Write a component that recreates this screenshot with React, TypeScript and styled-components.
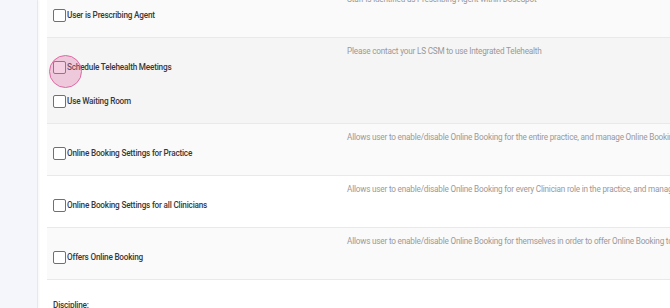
import styled, { createGlobalStyle } from "styled-components";

const GlobalStyle = createGlobalStyle`
	html, body {
		margin: 0;
		padding: 0;
		background: #ffffff;
		overflow: hidden;
	}
	body {
		font-family: Roboto, "Liberation Sans", sans-serif;
	}
`;

type Permission = {
	description: string;
	labels: string[];
	tone: "light" | "muted" | "white";
};

const permissions: Permission[] = [
	{
		description: "Staff is identified as Prescribing Agent within DoseSpot",
		labels: ["User is Prescribing Agent"],
		tone: "light",
	},
	{
		description: "Please contact your LS CSM to use Integrated Telehealth",
		labels: ["Schedule Telehealth Meetings", "Use Waiting Room"],
		tone: "muted",
	},
	{
		description:
			"Allows user to enable/disable Online Booking for the entire practice, and manage Online Booking settings",
		labels: ["Online Booking Settings for Practice"],
		tone: "light",
	},
	{
		description:
			"Allows user to enable/disable Online Booking for every Clinician role in the practice, and manage their settings",
		labels: ["Online Booking Settings for all Clinicians"],
		tone: "white",
	},
	{
		description:
			"Allows user to enable/disable Online Booking for themselves in order to offer Online Booking to their clients",
		labels: ["Offers Online Booking"],
		tone: "light",
	},
];

const toneColors = {
	light: "#fafafa",
	muted: "#f5f5f5",
	white: "#ffffff",
};

const Page = styled.div`
	display: flex;
	width: 670px;
	height: 308px;
	overflow: hidden;
`;

const Sidebar = styled.aside`
	flex: 0 0 37px;
	background: #f4f6fb;
	border-right: 1px solid #e6e8ee;
	box-shadow: 1px 0 2px rgba(0, 0, 0, 0.04);
`;

const Content = styled.main`
	flex: 1;
	padding-left: 9px;
	margin-top: -14px;
	min-width: 0;
	letter-spacing: -0.2px;
`;

const Row = styled.section<{ $tone: keyof typeof toneColors }>`
	display: flex;
	width: 900px;
	background: ${(p) => toneColors[p.$tone]};
	border-bottom: 1px solid #e9e9e9;
`;

const Checks = styled.div`
	flex: 0 0 294px;
	display: flex;
	flex-direction: column;
	gap: 20px;
	padding: 22px 0 15px 6px;
`;

const CheckItem = styled.label`
	position: relative;
	display: flex;
	align-items: center;
	height: 14px;
	font-size: 8.2px;
	font-weight: 500;
	color: #383838;
	white-space: nowrap;
`;

const Box = styled.span`
	box-sizing: border-box;
	width: 13px;
	height: 13px;
	margin-right: 1px;
	border: 1.5px solid #707070;
	border-radius: 2px;
	background: #ffffff;
`;

const Ripple = styled.span`
	position: absolute;
	left: -4px;
	top: -5px;
	width: 33px;
	height: 33px;
	border-radius: 50%;
	background: rgba(224, 120, 172, 0.35);
	border: 1.5px solid #dd6aa3;
	box-sizing: border-box;
	pointer-events: none;
`;

const Description = styled.p`
	margin: 0;
	padding-top: 6px;
	font-size: 8.2px;
	line-height: 14px;
	color: #999999;
	white-space: nowrap;
`;

const Field = styled.div`
	padding: 20px 0 0 6px;
	font-size: 8.2px;
	font-weight: 500;
	color: #383838;
`;

export default function App() {
	return (
		<>
			<GlobalStyle />
			<Page>
				<Sidebar />
				<Content>
					{permissions.map((perm) => (
						<Row key={perm.labels[0]} $tone={perm.tone}>
							<Checks>
								{perm.labels.map((label) => (
									<CheckItem key={label}>
										<Box />
										{label}
										{label === "Schedule Telehealth Meetings" && <Ripple />}
									</CheckItem>
								))}
							</Checks>
							<Description>{perm.description}</Description>
						</Row>
					))}
					<Field>Discipline:</Field>
				</Content>
			</Page>
		</>
	);
}
